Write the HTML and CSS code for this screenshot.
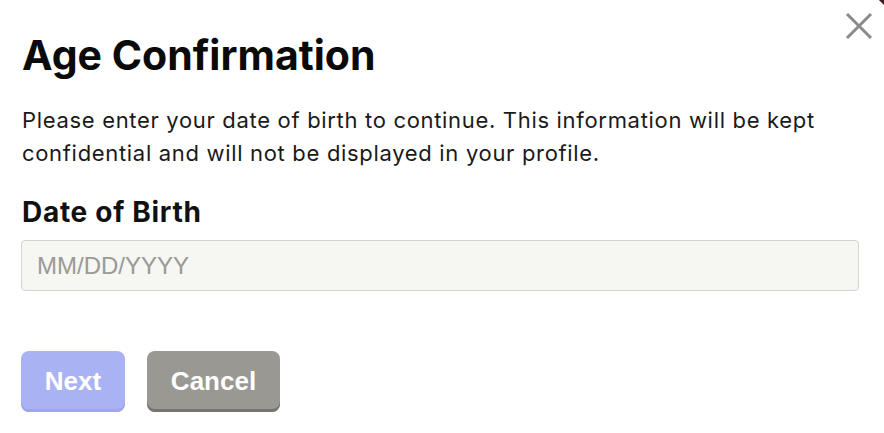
FILE: index.html
```html
<!DOCTYPE html>
<html lang="en">
<head>
<meta charset="utf-8">
<title>Age Confirmation</title>
<link rel="stylesheet" href="styles.css">
</head>
<body>
<div class="corner"></div>
<div class="modal">
  <button class="close" aria-label="Close">
    <svg width="30" height="30" viewBox="0 0 30 30"><path d="M3 3 L27 27 M27 3 L3 27" stroke="#8a8a8a" stroke-width="3" fill="none"/></svg>
  </button>
  <h1 class="title">Age Confirmation</h1>
  <p class="desc">Please enter your date of birth to continue. This information will be kept confidential and will not be displayed in your profile.</p>
  <label class="label" for="dob">Date of Birth</label>
  <input class="field" id="dob" type="text" placeholder="MM/DD/YYYY">
  <div class="actions">
    <button class="btn btn-next">Next</button>
    <button class="btn btn-cancel">Cancel</button>
  </div>
</div>
</body>
</html>
```

FILE: styles.css
```css
html, body {
  margin: 0;
  padding: 0;
  background: #ffffff;
}
body {
  width: 884px;
  height: 433px;
  overflow: hidden;
  position: relative;
  font-family: Inter, "Noto Sans", sans-serif;
  color: #111;
}
.corner {
  position: absolute;
  top: -6px;
  right: -6px;
  width: 10px;
  height: 10px;
  background: #3a1f22;
  transform: rotate(45deg);
}
.modal {
  position: relative;
  padding: 28px 25px 0 21px;
  display: flex;
  flex-direction: column;
}
.close {
  position: absolute;
  top: 11px;
  right: 10px;
  background: none;
  border: 0;
  padding: 0;
  width: 30px;
  height: 30px;
}
.title {
  margin: 0 0 0 1px;
  font-size: 41px;
  font-weight: 700;
  line-height: 54px;
  color: #0a0a0a;
  letter-spacing: 0;
}
.desc {
  margin: 22px 0 0 1px;
  font-size: 22px;
  line-height: 33px;
  letter-spacing: 0.68px;
  color: #1a1a1a;
}
.label {
  margin: 25px 0 0 1px;
  font-size: 28px;
  font-weight: 700;
  line-height: 34px;
  letter-spacing: 0.7px;
  color: #111;
}
.field {
  margin-top: 11px;
  height: 51px;
  box-sizing: border-box;
  border: 1px solid #d4d4d0;
  border-radius: 4px;
  background: #f6f6f2;
  padding: 0 15px;
  font-family: "Liberation Sans", Arial, sans-serif;
  font-size: 24px;
  color: #333;
}
.field::placeholder {
  color: #9a9a96;
}
.actions {
  margin-top: 60px;
  display: flex;
  gap: 22px;
}
.btn {
  height: 61px;
  box-sizing: border-box;
  border: 0;
  border-radius: 8px;
  font-family: "Liberation Sans", Arial, sans-serif;
  font-size: 26px;
  font-weight: 700;
  color: #fff;
  padding: 0;
}
.btn-next {
  width: 104px;
  background: #a9b3f3;
  box-shadow: inset 0 -3px 0 #9ea7e8;
}
.btn-cancel {
  width: 133px;
  background: #9a9893;
  box-shadow: inset 0 -3px 0 #77756f;
}
```
